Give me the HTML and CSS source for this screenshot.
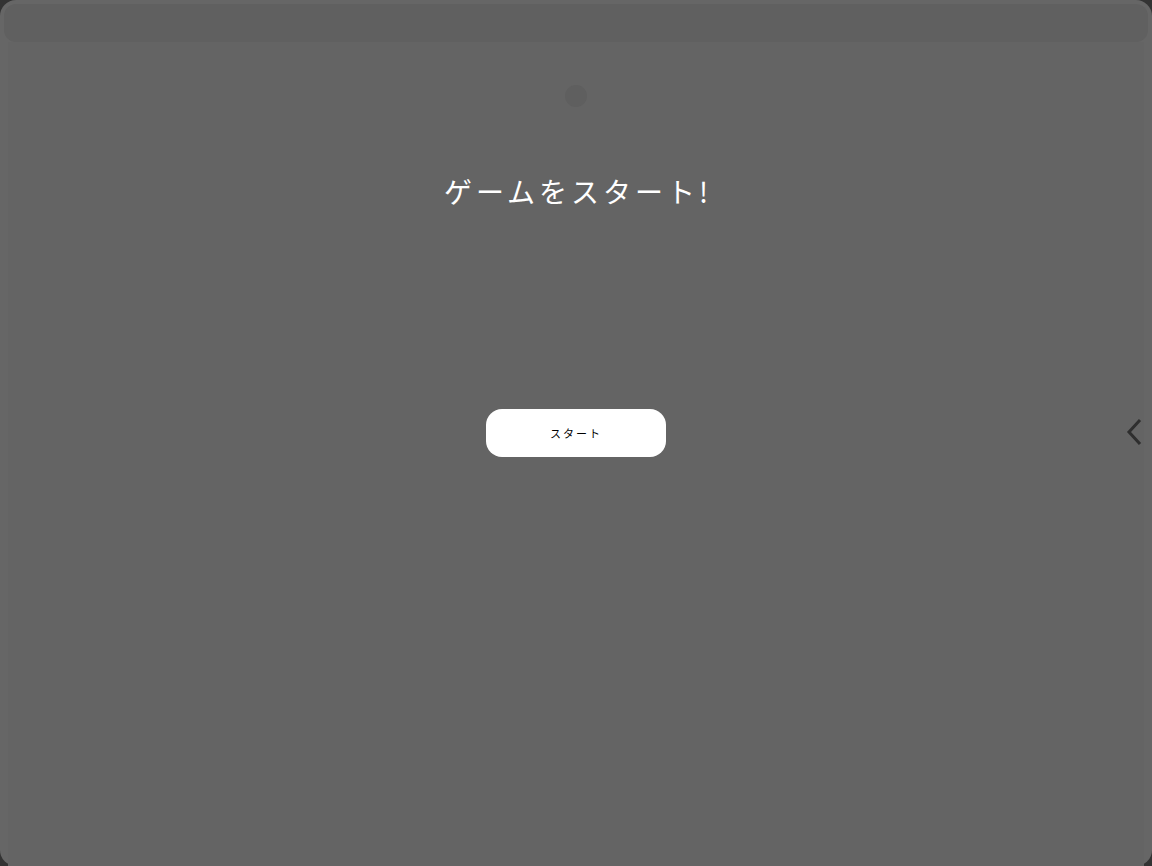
FILE: index.html
```html
<!DOCTYPE html>
<html lang="ja">
<head>
<meta charset="utf-8">
<link rel="stylesheet" href="styles.css">
</head>
<body>
<div class="screen">
  <div class="topbar"></div>
  <div class="content">
    <div class="dot"></div>
    <h1 class="title">ゲームをスタート!</h1>
    <button class="start">スタート</button>
  </div>
  <div class="chevron">
    <svg width="16" height="26" viewBox="0 0 16 26"><path d="M14 1 L3 13 L14 25" fill="none" stroke="#2e2e2e" stroke-width="3"/></svg>
  </div>
</div>
</body>
</html>
```
FILE: styles.css
```css
html, body { margin: 0; padding: 0; }
body {
  background: #333333;
  width: 1152px;
  height: 866px;
  overflow: hidden;
  font-family: "Noto Sans CJK JP", "Noto Sans", sans-serif;
}
.screen {
  position: relative;
  height: 866px;
  border-radius: 16px;
  background: #666666;
  padding: 4px 4px 0 4px;
  box-sizing: border-box;
  display: flex;
  flex-direction: column;
}
.topbar {
  height: 38px;
  border-radius: 12px;
  background: #606060;
  flex: none;
}
.content {
  flex: 1;
  margin: 0 4px;
  background: #646464;
  display: flex;
  flex-direction: column;
  align-items: center;
}
.dot {
  width: 22px;
  height: 22px;
  border-radius: 50%;
  background: #5f5f5f;
  margin-top: 43px;
}
.title {
  margin: 64px 0 0 4px;
  font-size: 28px;
  font-weight: 400;
  letter-spacing: 4px;
  color: #ffffff;
  line-height: 40px;
}
.start {
  margin-top: 198px;
  width: 180px;
  height: 48px;
  border: none;
  border-radius: 16px;
  background: #ffffff;
  color: #000000;
  font-family: "Noto Sans CJK JP", "Noto Sans", sans-serif;
  font-size: 11px;
  letter-spacing: 2px;
  padding: 0;
}
.chevron {
  position: absolute;
  right: 10px;
  top: 419px;
}
```
